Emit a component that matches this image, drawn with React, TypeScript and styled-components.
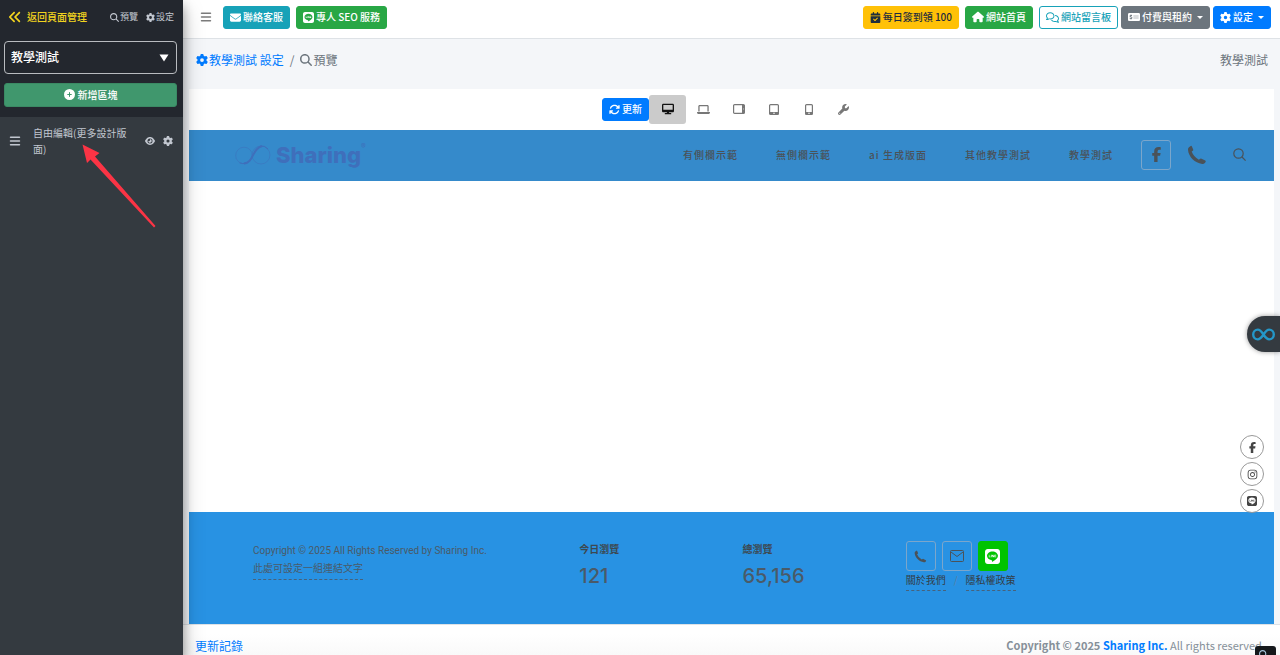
import React from "react";
import styled, { createGlobalStyle, css } from "styled-components";
import {
  FaAnglesLeft, FaMagnifyingGlass, FaGear, FaCirclePlus, FaBars, FaEye, FaEnvelope, FaLine,
  FaCalendarCheck, FaHouse, FaRegComments, FaMoneyCheckDollar, FaArrowsRotate, FaDesktop, FaLaptop,
  FaWrench, FaFacebookF, FaInstagram,
} from "react-icons/fa6";

const Global = createGlobalStyle`
  *, *::before, *::after { box-sizing: border-box; }
  body {
    margin: 0;
    background: #f4f6f9;
    color: #6c757d;
    font: 400 12px/16px "Noto Sans CJK TC", sans-serif;
  }
  a { color: inherit; text-decoration: none; }
  button, select { font: inherit; color: inherit; margin: 0; cursor: pointer; }
  svg { flex: none; display: block; }
`;

const Shell = styled.div`
  display: grid;
  grid-template-columns: 183px minmax(0, 1fr);
  height: 100vh;
  overflow: hidden;
`;

/* Sidebar */
const Sidebar = styled.aside`
  position: relative;
  z-index: 2;
  background: #343a40;
  color: #c2c7d0;
  box-shadow: 0 10px 20px rgba(0, 0, 0, 0.25), 0 6px 10px rgba(0, 0, 0, 0.3);
`;
const SidebarTop = styled.div`
  display: flex;
  flex-direction: column;
  height: 117px;
  padding: 0 6px 0 4px;
  background: #23272e;
`;
const SidebarLinks = styled.nav`
  display: flex;
  align-items: center;
  height: 34px;
  margin-bottom: 7px;
  padding: 0 3px 0 4px;
`;
const SmallLink = styled.a`
  display: flex;
  align-items: center;
  gap: 1px;
  margin-left: 8px;
  font-size: 9px;
`;
const BackLink = styled.a`
  display: flex;
  align-items: center;
  gap: 5px;
  margin-right: auto;
  color: #f2d41f;
  font-size: 10px;
  font-weight: 500;
`;
const SelectWrap = styled.label`
  display: grid;
  align-items: center;
  height: 33px;
  margin-bottom: 9px;
  color: #fff;
  > * { grid-area: 1 / 1; }
  > svg { justify-self: end; margin-right: 8px; pointer-events: none; }
`;
const PageSelect = styled.select`
  appearance: none;
  width: 100%;
  height: 100%;
  padding: 0 6px 2px;
  border: 1px solid #b9bcc0;
  border-radius: 4px;
  background: transparent;
  font-weight: 500;
`;
const AddButton = styled.button`
  display: flex;
  align-items: center;
  justify-content: center;
  gap: 3px;
  height: 24px;
  padding: 0 0 1px;
  border: 1px solid #3b8a64;
  border-radius: 3px;
  background: #40976d;
  color: #fff;
  font-size: 10px;
  font-weight: 500;
`;
const BlockRow = styled.div`
  display: flex;
  align-items: center;
  padding: 8px 10px 0 9px;
  font-size: 10px;
`;
const BlockName = styled.span`
  flex: 1;
  margin: 0 12px 0 12px;
`;
const IconButton = styled.button`
  display: flex;
  padding: 0;
  border: 0;
  background: none;
  & + & { margin-left: 8px; }
`;
const Pointer = styled.svg`
  position: absolute;
  left: 80px;
  top: 142px;
`;

/* Main column */
const Main = styled.main`
  display: flex;
  flex-direction: column;
  min-width: 0;
`;
const TopBar = styled.header`
  display: flex;
  align-items: center;
  gap: 6px;
  height: 39px;
  padding: 0 9px 4px 17px;
  border-bottom: 1px solid #dee2e6;
  background: #fff;
`;
const MenuButton = styled(IconButton)`
  margin-right: 5px;
  color: #7b7b7b;
`;
const Group = styled.div`
  display: flex;
  gap: 3px;
`;
const Spacer = styled.span`
  flex: 1;
`;
const tones = {
  info: css`background: #17a2b8; border-color: #17a2b8; color: #fff;`,
  success: css`background: #28a745; border-color: #28a745; color: #fff;`,
  warning: css`background: #ffc107; border-color: #ffc107; color: #1f2d3d;`,
  outline: css`background: #fff; border-color: #17a2b8; color: #17a2b8;`,
  secondary: css`background: #6c757d; border-color: #6c757d; color: #fff;`,
  primary: css`background: #007bff; border-color: #007bff; color: #fff;`,
};
const Btn = styled.button<{ $tone: keyof typeof tones }>`
  display: flex;
  align-items: center;
  gap: 2px;
  height: 23px;
  padding: 0 6px;
  border: 1px solid;
  border-radius: 3px;
  font-size: 10px;
  font-weight: 500;
  white-space: nowrap;
  ${(p) => tones[p.$tone]}
`;
const Caret = styled.span`
  margin-left: 3px;
  border: 3px solid transparent;
  border-top-color: currentColor;
  border-bottom: 0;
`;
const Crumbs = styled.nav`
  display: flex;
  align-items: center;
  height: 42px;
  margin-bottom: 8px;
  padding: 0 12px 0 13px;
`;
const Crumb = styled.a<{ $link?: boolean }>`
  display: flex;
  align-items: center;
  gap: 1px;
  color: ${(p) => (p.$link ? "#007bff" : "#6c757d")};
`;
const Slash = styled.span`
  margin: 0 6px;
`;
const Frame = styled.section`
  display: flex;
  flex: 1;
  flex-direction: column;
  min-height: 0;
  margin: 0 6px;
  background: #fff;
`;
const DeviceBar = styled.div`
  display: flex;
  align-items: center;
  justify-content: center;
  height: 41px;
  padding-bottom: 1px;
`;
const DeviceButton = styled.button<{ $active?: boolean }>`
  display: flex;
  align-items: center;
  justify-content: center;
  width: ${(p) => (p.$active ? 37 : 35)}px;
  height: 29px;
  padding: 0;
  border: 0;
  border-radius: 3px;
  background: ${(p) => (p.$active ? "#cbcbcb" : "none")};
  color: ${(p) => (p.$active ? "#111" : "#777")};
`;
const SiteHeader = styled.div`
  display: flex;
  align-items: center;
  justify-content: space-between;
  height: 51px;
  padding: 0 28px 2px 46px;
  background: #358acb;
  color: #4a5259;
`;
const Brand = styled.a`
  display: flex;
  align-items: center;
  gap: 5px;
  color: #3f6fbb;
  font: 800 22px/30px Inter, sans-serif;
`;
const Reg = styled.sup`
  align-self: flex-start;
  margin-left: -5px;
  font: 400 7px/14px Inter, sans-serif;
`;
const SiteNav = styled.nav`
  display: flex;
  align-items: center;
`;
const SiteLinks = styled.div`
  display: flex;
  gap: 38px;
  margin-right: 28px;
`;
const SiteLink = styled.a`
  font-size: 10px;
  font-weight: 500;
  letter-spacing: 1px;
`;
const PhoneLink = styled.a`
  margin: 0 26px 0 16px;
`;
const Square = styled.a<{ $line?: boolean }>`
  display: flex;
  align-items: center;
  justify-content: center;
  width: 30px;
  height: 30px;
  border: 1px solid ${(p) => (p.$line ? "#00c300" : "#7ba6cb")};
  border-radius: 3px;
  background: ${(p) => (p.$line ? "#00c300" : "none")};
  color: ${(p) => (p.$line ? "#fff" : "#4a5259")};
`;
const Canvas = styled.div`
  flex: 1;
`;
const SiteFooter = styled.footer`
  display: grid;
  grid-template-columns: 2fr 1fr 1fr 2fr;
  height: 112px;
  padding: 29px 42px 0 64px;
  background: #2892e3;
  color: #4a5a68;
  font-size: 10px;
`;
const Legal = styled.div`
  display: flex;
  flex-direction: column;
  align-items: flex-start;
  gap: 2px;
  padding-top: 2px;
  font-family: Roboto, "Noto Sans CJK TC", sans-serif;
`;
const Dashed = styled.a`
  padding-bottom: 2px;
  border-bottom: 1px dashed #46627c;
`;
const StatName = styled.div`
  color: #3d4850;
  font-weight: 700;
`;
const StatValue = styled.div`
  margin-top: 7px;
  font: 500 20px/24px Inter, sans-serif;
`;
const Squares = styled.div`
  display: flex;
  gap: 6px;
`;
const Policies = styled.div`
  display: flex;
  gap: 8px;
  margin-top: 1px;
  color: #343d45;
`;
const Divider = styled.span`
  color: #5a7f9f;
`;
const BottomBar = styled.footer`
  display: flex;
  justify-content: space-between;
  height: 31px;
  padding: 13px 15px 0 12px;
  border-top: 1px solid #dee2e6;
  background: linear-gradient(#fff 30%, #f9f9f9);
  color: #869099;
  white-space: nowrap;
`;
const BlueLink = styled.a`
  color: #007bff;
`;
const Notice = styled.span`
  font-size: 11px;
  line-height: 14px;
`;

/* Floating controls */
const Helper = styled.button`
  position: fixed;
  right: 0;
  top: 316px;
  z-index: 3;
  display: flex;
  align-items: center;
  width: 33px;
  height: 36px;
  padding: 0 0 0 5px;
  border: 0;
  border-radius: 18px 0 0 18px;
  background: #343a40;
  color: #2497c8;
  box-shadow: 0 0 5px rgba(0, 0, 0, 0.4);
`;
const SocialStack = styled.div`
  position: fixed;
  right: 16px;
  bottom: 142px;
  z-index: 3;
  display: flex;
  flex-direction: column;
  gap: 3px;
`;
const Round = styled.a`
  display: flex;
  align-items: center;
  justify-content: center;
  width: 24px;
  height: 24px;
  border: 1px solid #999;
  border-radius: 50%;
  color: #444;
`;
const Corner = styled.button`
  position: fixed;
  right: 4px;
  bottom: 0;
  z-index: 3;
  display: flex;
  justify-content: center;
  width: 21px;
  height: 9px;
  padding: 4px 4px 0 0;
  overflow: hidden;
  border: 0;
  border-radius: 3px 3px 0 0;
  background: #15181b;
  color: #a5c4da;
`;

const Tablet = ({ kind }: { kind: "wide" | "tall" | "phone" }) => {
  const [x, y, w, h] = { wide: [1, 2, 12, 10], tall: [2, 2, 10, 11], phone: [3, 2, 8, 11] }[kind];
  return (
    <svg width="14" height="14" viewBox="0 0 14 14">
      <rect x={x + 0.6} y={y + 0.6} width={w - 1.2} height={h - 1.2} rx="1" fill="none" stroke="currentColor" strokeWidth="1.2" />
      {kind === "wide" ? (
        <path d="M10 3h2.400v3.300h-.9v1.400h.9V11H10z" fill="currentColor" />
      ) : (
        <path
          fill="currentColor"
          fillRule="evenodd"
          d={`M${x + 0.5} ${y + h - 3}h${w - 1}v2.500h-${w - 1}zM${x + w / 2 - 0.8} ${y + h - 2.2}h1.600v1.200h-1.600z`}
        />
      )}
    </svg>
  );
};

const LogoMark = () => (
  <svg width="36" height="22" viewBox="0 0 36 22" fill="none" stroke="currentColor">
    <circle cx="9" cy="11.500" r="8.300" strokeWidth=".5" />
    <circle cx="26" cy="11" r="9" strokeWidth=".5" />
    <path d="M9 19.600c10-1 8-15.500 18-17.300" strokeWidth="2" />
    <path d="M25 2q5-.6 8 3M4.500 18.800q3 1.200 6 .5" strokeWidth="1" />
  </svg>
);

const InfinityMark = () => (
  <svg width="23" height="13" viewBox="0 0 23 13" fill="none" stroke="currentColor" strokeWidth="2.4">
    <path d="M11.5 6.5C9.5 3.5 8 1.6 5.8 1.6a4.6 4.9 0 0 0 0 9.8c2.2 0 3.700-1.900 5.700-4.900s3.500-4.900 5.700-4.900a4.600 4.900 0 0 1 0 9.800c-2.200 0-3.700-1.900-5.700-4.900z" />
  </svg>
);

const Handset = ({ size }: { size: number }) => (
  <svg width={size} height={size} viewBox="0 0 20 20" fill="currentColor">
    <path d="M2 2.200L3.700 1q.8-.5 1.200.4l1.300 3.100q.3.800-.4 1.300l-1.100.8q1.700 5 7.200 8.100l1.300-.9q.7-.5 1.400 0l3.600 1.800q.9.500.4 1.300l-.8 1.100q-.9 1.100-2.700.9C8 18 1.500 12 1 4.800Q.9 3.100 2 2.200z" />
  </svg>
);

const Lens = () => (
  <svg width="13" height="13" viewBox="0 0 13 13" fill="none" stroke="currentColor" strokeWidth="1.2">
    <circle cx="5.500" cy="5.500" r="4.700" /><path d="M9 9l3.600 3.600" />
  </svg>
);

const siteLinks = ["有側欄示範", "無側欄示範", "ai 生成版面", "其他教學測試", "教學測試"];

export default function App() {
  return (
    <>
      <Global />
      <Shell>
        <Sidebar>
          <SidebarTop>
            <SidebarLinks>
              <BackLink href="#"><FaAnglesLeft size={14} />返回頁面管理</BackLink>
              <SmallLink href="#"><FaMagnifyingGlass size={9} />預覽</SmallLink>
              <SmallLink href="#"><FaGear size={9} />設定</SmallLink>
            </SidebarLinks>
            <SelectWrap>
              <PageSelect aria-label="頁面"><option>教學測試</option></PageSelect>
              <svg width="10" height="8" viewBox="0 0 10 8" fill="currentColor"><path d="M.5.5h9L5 7.500z" /></svg>
            </SelectWrap>
            <AddButton><FaCirclePlus size={11} />新增區塊</AddButton>
          </SidebarTop>
          <BlockRow>
            <FaBars size={12} />
            <BlockName>自由編輯(更多設計版面)</BlockName>
            <IconButton aria-label="顯示"><FaEye size={10} /></IconButton>
            <IconButton aria-label="設定"><FaGear size={10} /></IconButton>
          </BlockRow>
          <Pointer width="76" height="86" viewBox="0 0 76 86" fill="#fb3445">
            <path d="M2.500 2.500L19.500 11 15 14.500 75.500 84 74 85.500 10.500 17.500 7 21z" />
          </Pointer>
        </Sidebar>

        <Main>
          <TopBar>
            <MenuButton aria-label="選單"><FaBars size={12} /></MenuButton>
            <Btn $tone="info"><FaEnvelope size={11} />聯絡客服</Btn>
            <Btn $tone="success"><FaLine size={11} />專人 SEO 服務</Btn>
            <Spacer />
            <Btn $tone="warning"><FaCalendarCheck size={11} />每日簽到領 100</Btn>
            <Btn $tone="success"><FaHouse size={12} />網站首頁</Btn>
            <Group>
              <Btn $tone="outline"><FaRegComments size={13} />網站留言板</Btn>
              <Btn $tone="secondary"><FaMoneyCheckDollar size={12} />付費與租約<Caret /></Btn>
              <Btn $tone="primary"><FaGear size={11} />設定<Caret /></Btn>
            </Group>
          </TopBar>
          <Crumbs>
            <Crumb href="#" $link><FaGear size={12} />教學測試 設定</Crumb>
            <Slash>/</Slash>
            <Crumb href="#"><FaMagnifyingGlass size={12} />預覽</Crumb>
            <Spacer />
            <span>教學測試</span>
          </Crumbs>
          <Frame>
            <DeviceBar>
              <Btn $tone="primary"><FaArrowsRotate size={11} />更新</Btn>
              <DeviceButton $active aria-label="桌面"><FaDesktop size={12} /></DeviceButton>
              <DeviceButton aria-label="筆電"><FaLaptop size={13} /></DeviceButton>
              <DeviceButton aria-label="平板橫向"><Tablet kind="wide" /></DeviceButton>
              <DeviceButton aria-label="平板"><Tablet kind="tall" /></DeviceButton>
              <DeviceButton aria-label="手機"><Tablet kind="phone" /></DeviceButton>
              <DeviceButton aria-label="工具"><FaWrench size={11} /></DeviceButton>
            </DeviceBar>
            <SiteHeader>
              <Brand href="#"><LogoMark />Sharing<Reg>®</Reg></Brand>
              <SiteNav>
                <SiteLinks>
                  {siteLinks.map((t) => <SiteLink href="#" key={t}>{t}</SiteLink>)}
                </SiteLinks>
                <Square href="#" aria-label="Facebook"><FaFacebookF size={15} /></Square>
                <PhoneLink href="#" aria-label="電話"><Handset size={20} /></PhoneLink>
                <IconButton aria-label="搜尋"><Lens /></IconButton>
              </SiteNav>
            </SiteHeader>
            <Canvas />
            <SiteFooter>
              <Legal>
                <span>Copyright © 2025 All Rights Reserved by Sharing Inc.</span>
                <Dashed href="#">此處可設定一組連結文字</Dashed>
              </Legal>
              <div><StatName>今日瀏覽</StatName><StatValue>121</StatValue></div>
              <div><StatName>總瀏覽</StatName><StatValue>65,156</StatValue></div>
              <div>
                <Squares>
                  <Square href="#" aria-label="電話"><Handset size={13} /></Square>
                  <Square href="#" aria-label="信箱">
                    <svg width="14" height="12" viewBox="0 0 14 12" fill="none" stroke="currentColor">
                      <rect x=".5" y=".5" width="13" height="11" rx="1" /><path d="M1 2l6 4.500L13 2" />
                    </svg>
                  </Square>
                  <Square href="#" $line aria-label="LINE"><FaLine size={15} /></Square>
                </Squares>
                <Policies><Dashed href="#">關於我們</Dashed><Divider>/</Divider><Dashed href="#">隱私權政策</Dashed></Policies>
              </div>
            </SiteFooter>
          </Frame>
          <BottomBar>
            <BlueLink href="#">更新記錄</BlueLink>
            <Notice><strong>Copyright © 2025 <BlueLink href="#">Sharing Inc.</BlueLink></strong> All rights reserved.</Notice>
          </BottomBar>
        </Main>
      </Shell>
      <Helper aria-label="小幫手"><InfinityMark /></Helper>
      <SocialStack>
        <Round href="#" aria-label="Facebook"><FaFacebookF size={11} /></Round>
        <Round href="#" aria-label="Instagram"><FaInstagram size={11} /></Round>
        <Round href="#" aria-label="LINE"><FaLine size={10} /></Round>
      </SocialStack>
      <Corner aria-label="檢視"><FaMagnifyingGlass size={9} /></Corner>
    </>
  );
}
